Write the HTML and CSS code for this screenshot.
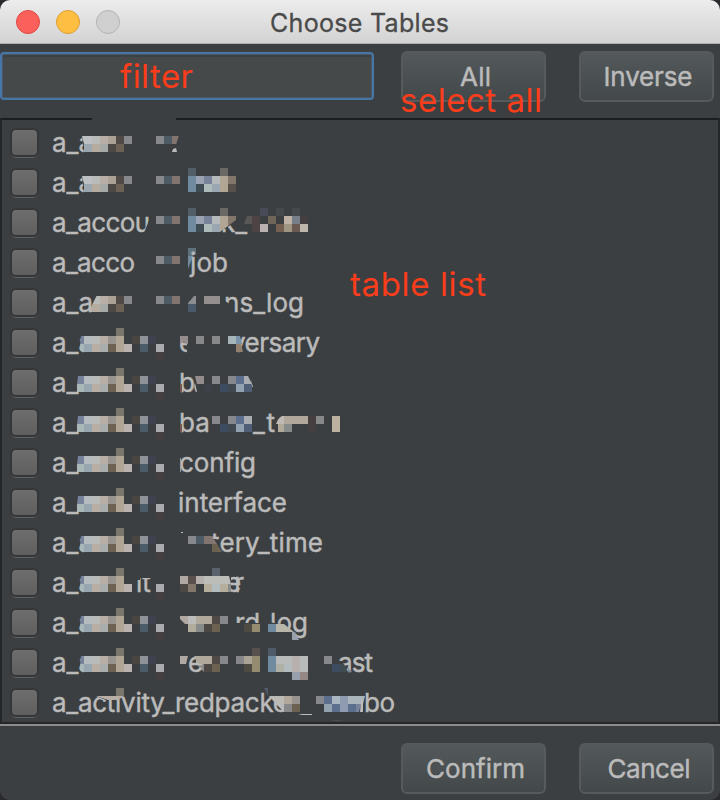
FILE: index.html
```
<!DOCTYPE html>
<html lang="en">
<head>
<meta charset="utf-8">
<title>Choose Tables</title>
<link rel="stylesheet" href="styles.css">
</head>
<body>
<svg class="defs" aria-hidden="true">
  <defs>
    <g id="dots"><path fill="#87888b" d="M156 13h8v8h-8z"/><path fill="#4c5b66" d="M164 13h8v8h-8z"/><path fill="#82756f" d="M172 13h8v8h-8z"/></g>
    <g id="acc">
      <path class="bg" d="M82 12h50v18H84z"/>
      <path fill="#bcc0c2" d="M82 13h10v8h-8z"/><path fill="#b9bbbb" d="M92 13h8v8h-8z"/><path fill="#b9aea6" d="M100 13h8v8h-8z"/><path fill="#aba296" d="M108 13h8v8h-8z"/><path fill="#4f4a45" d="M116 13h8v8h-8z"/><path fill="#87888b" d="M124 13h8v8h-8z"/>
      <path fill="#9ba7ae" d="M84 21h8v8h-8z"/><path fill="#b5ab9e" d="M92 21h8v8h-8z"/><path fill="#a5a9a8" d="M100 21h8v8h-8z"/><path fill="#4d4a45" d="M108 21h8v8h-8z"/><path fill="#6b6153" d="M116 21h8v8h-8z"/>
    </g>
    <g id="act">
      <path class="bg" d="M84 12h20v18H84z"/>
      <path fill="#77839b" d="M81 13h3v8h-4z"/><path fill="#b5bbbe" d="M84 13h8v8h-8z"/><path fill="#b9bbbb" d="M92 13h8v8h-8z"/><path fill="#b9aea6" d="M100 13h8v8h-8z"/><path fill="#98938f" d="M108 13h8v8h-8z"/><path fill="#7b776d" d="M116 5h8v8h-8z"/><path fill="#b1a594" d="M116 13h8v16h-8z"/>
      <path fill="#a9b8b7" d="M80 21h4v8h-2z"/><path fill="#98a6b1" d="M84 21h8v8h-8z"/><path fill="#b8aea3" d="M92 21h8v8h-8z"/><path fill="#a9adab" d="M100 21h8v8h-8z"/><path fill="#6d6252" d="M108 21h8v8h-8z"/><path fill="#bbb3b0" d="M124 21h8v8h-8z"/>
      <path fill="#4b4542" d="M132 13h8v8h-8z"/><path fill="#8f9299" d="M140 13h8v8h-8z"/><path fill="#404150" d="M148 13h8v8h-8z"/><path fill="#4c5c6a" d="M140 21h8v8h-8z"/><path fill="#a9abb0" d="M156 21h8v8h-8z"/><path fill="#463f42" d="M156 29h8v8h-8z"/>
    </g>
    <g id="edge"><path fill="#77839b" d="M78 13h6v8h-7z"/><path fill="#a9b8b7" d="M77 21h7v8h-7z"/></g>
    <g id="hook">
      <path fill="#515d68" d="M188 5h8v8h-8z"/><path fill="#6a6965" d="M220 5h8v8h-8z"/><path fill="#708ba0" d="M188 13h8v16h-8z"/><path fill="#9aa3b1" d="M196 13h8v8h-8z"/><path fill="#77829b" d="M204 13h8v8h-8z"/><path fill="#b5b9bc" d="M212 13h8v8h-8z"/><path fill="#404c54" d="M196 21h8v8h-8z"/><path fill="#adbbbb" d="M204 21h8v8h-8z"/><path fill="#9aa7b2" d="M212 21h8v8h-8z"/>
    </g>
    <g id="ban">
      <path fill="#87888d" d="M212 13h8v8h-8zM228 13h8v8h-8z"/><path fill="#5d6f8e" d="M236 13h8v8h-8z"/><path fill="#3d4c60" d="M220 21h8v8h-8z"/><path fill="#404952" d="M228 21h8v8h-8z"/><path fill="#93a2b0" d="M236 21h8v8h-8z"/><path fill="#4f5f77" d="M244 21h8v8h-8z"/>
    </g>
    <g id="rec">
      <path fill="#b0a89b" d="M196 13h16v8h-16z"/><path fill="#4f4a45" d="M212 13h8v8h-8z"/><path fill="#87888d" d="M220 13h8v8h-8z"/><path fill="#4d4844" d="M204 21h8v8h-8z"/><path fill="#6d6252" d="M212 21h8v8h-8z"/>
    </g>
  </defs>
</svg>
<main class="window">
  <header class="titlebar">
    <div class="lights"><i class="light close"></i><i class="light minimize"></i><i class="light zoom"></i></div>
    <h1 class="title"><svg width="182" height="43"><text x="1" y="32" textLength="179">Choose Tables</text></svg></h1>
  </header>
  <div class="toolbar">
    <div class="field"></div>
    <button class="btn wide all"><svg width="140" height="46"><text x="57" y="32" textLength="31">All</text></svg></button>
    <button class="btn narrow"><svg width="130" height="46"><text x="22.5" y="32" textLength="89">Inverse</text></svg></button>
  </div>
  <section class="list">
    <i class="notch"></i>
    <div class="row"><i class="check"></i><svg class="name" viewBox="48 0 660 40"><text x="52" y="29">a_a</text><use href="#acc"/><use href="#dots"/><path class="bg" d="M179 12h3v10h-6z"/><path class="ink" d="M172 29l1-3 3-1 1 4z"/></svg></div>
    <div class="row"><i class="check"></i><svg class="name" viewBox="48 0 660 40"><text x="52" y="29">a_a</text><use href="#acc"/><use href="#dots"/><use href="#hook"/><path fill="#b1a594" d="M220 13h8v16h-8z"/><path fill="#82776a" d="M228 13h8v8h-8z"/><path fill="#58504b" d="M228 21h8v8h-8z"/></svg></div>
    <div class="row"><i class="check"></i><svg class="name" viewBox="48 0 660 40"><text x="52" y="29" textLength="98">a_accou</text><path class="bg" d="M151 12v18h-7z"/><use href="#dots"/><text x="221" y="29">k_</text><path class="bg" d="M220 8h17v9l-12 9h-5z"/><use href="#hook"/><path fill="#b1a594" d="M220 13h8v10l-8 6z"/><path fill="#82776a" d="M228 13h8v4l-8 6z"/><path fill="#595855" d="M247 13h5v8h-8z"/><path fill="#4f4445" d="M252 13h8v16h-8z"/><path fill="#474c58" d="M260 5h8v8h-8z"/><path fill="#43494c" d="M276 5h8v8h-8zM292 5h8v8h-8z"/><path fill="#706559" d="M268 13h8v8h-8z"/><path fill="#bfb1a3" d="M284 13h8v8h-8z"/><path fill="#77808a" d="M292 13h8v8h-8z"/><path fill="#453f42" d="M300 13h8v8h-8z"/><path fill="#b9b2b1" d="M260 21h8v8h-8z"/><path fill="#756052" d="M276 21h8v8h-8z"/><path fill="#a09482" d="M284 21h8v8h-8z"/><path fill="#6b5a54" d="M292 21h8v8h-8z"/><path fill="#bfb7ab" d="M300 21h8v8h-8z"/></svg></div>
    <div class="row"><i class="check"></i><svg class="name" viewBox="48 0 660 40"><text x="52" y="29" textLength="83">a_acco</text><use href="#dots"/><path fill="#5f717b" d="M188 5h8v6l-3 2h-5z"/><path fill="#708ba0" d="M188 13h5l-5 13z"/><text x="190" y="29" textLength="38">job</text></svg></div>
    <div class="row"><i class="check"></i><svg class="name" viewBox="48 0 660 40"><text x="52" y="29">a_a</text><use href="#acc"/><path class="bg" d="M91 12h6l-6 12z"/><path class="bg" d="M50 10h41v24H50z"/><text x="52" y="29">a_a</text><use href="#dots"/><path fill="#8b8d92" d="M188 20l6-7h2v8h-8z"/><path fill="#4b5a6b" d="M188 21h8v8h-8z"/><path fill="#958f8f" d="M204 13h16v8h-16z"/><text x="224" y="29" textLength="80">ns_log</text><path class="bg" d="M223 17l7 4v9h-7z"/></svg></div>
    <div class="row"><i class="check"></i><svg class="name" viewBox="48 0 660 40"><text x="52" y="29">a_a</text><use href="#act"/><text x="179" y="29" textLength="13">e</text><path class="bg" d="M187 10h8v22h-8z"/><path fill="#958d8d" d="M180 13h8v8h-2l-3-3-2 3h-1z"/><path fill="#87888a" d="M196 13h8v8h-8zM212 13h8v8h-8z"/><text x="231" y="29" textLength="89">versary</text><path class="bg" d="M228 12h10v18h-10z"/><path fill="#a5b5ba" d="M228 13h8v8h-8z"/><path fill="#7b93a8" d="M236 13h4l2 8h-6z"/><path fill="#94806f" d="M236 21h5l2 8h-7z"/></svg></div>
    <div class="row"><i class="check"></i><svg class="name" viewBox="48 0 660 40"><text x="52" y="29">a_</text><use href="#act"/><use href="#edge"/><text x="179" y="29">b</text><path fill="#6e5a50" d="M180 21h2v8h-2z"/><path fill="#958d8d" d="M195 13h9v8h-7z"/><path class="ink" d="M195 20l2 9h-1q-3-5-1-9z"/><path fill="#3d4148" d="M204 21h8v8h-8z"/><use href="#ban"/><path fill="#a9adb1" d="M244 13h4l4 8h-8z"/><path class="ink" d="M251 17l2 7h-1z"/></svg></div>
    <div class="row"><i class="check"></i><svg class="name" viewBox="48 0 660 40"><text x="52" y="29">a_</text><use href="#act"/><use href="#edge"/><text x="179" y="29">ba</text><path fill="#6e5a50" d="M180 21h2v8h-2z"/><use href="#ban"/><path fill="#a9adb1" d="M244 13h8v8h-8z"/><text x="253" y="29" textLength="22">_t</text><path fill="#bfbab5" d="M276 21q2-6 6-8h2v8z"/><path fill="#b1a79b" d="M284 13h24v8h-24z"/><path fill="#b1a999" d="M278 21h6v8h-6z"/><path fill="#878c8b" d="M284 21h8v8h-8z"/><path fill="#463f42" d="M308 13h8v16h-8z"/><path fill="#87888a" d="M316 13h8v8h-8z"/><path fill="#bdb2a2" d="M332 13h8v16h-8z"/></svg></div>
    <div class="row"><i class="check"></i><svg class="name" viewBox="48 0 660 40"><text x="52" y="29">a_</text><use href="#act"/><use href="#edge"/><text x="179" y="29" textLength="77">config</text><path fill="#a09a94" d="M180 15h1v14h-1z"/></svg></div>
    <div class="row"><i class="check"></i><svg class="name" viewBox="48 0 660 40"><text x="52" y="29">a_</text><use href="#act"/><use href="#edge"/><text x="178" y="29" textLength="109">interface</text></svg></div>
    <div class="row"><i class="check"></i><svg class="name" viewBox="48 0 660 40"><text x="52" y="29">a_a</text><use href="#act"/><path class="ink" d="M181 9h2v1h-2z"/><text x="211" y="29" textLength="112">tery_time</text><path class="bg" d="M210 16h6l4 8v6h-10z"/><path fill="#87888d" d="M188 13h8v8h-8z"/><path fill="#4c5b66" d="M196 13h8v8h-8z"/><path fill="#82756f" d="M204 13h8l5 8h-13z"/><path fill="#6d6252" d="M212 21h5l5 8h-10z"/></svg></div>
    <div class="row"><i class="check"></i><svg class="name" viewBox="48 0 660 40"><text x="52" y="29">a_a</text><use href="#act"/><path class="bg" d="M132 12h24v18h-24z"/><text x="136" y="29">it</text><path class="bg" d="M134 5h20v10l-14 0v2h-6z"/><text x="226" y="29" textLength="18">er</text><path class="bg" d="M224 12h7v18h-7z"/><path fill="#5c626b" d="M212 5h8v8h-8z"/><path fill="#b0a8a2" d="M180 13h8v8h-8z"/><path fill="#5a504b" d="M188 13h8v8h-8z"/><path fill="#b5b0ab" d="M196 13h8v8h-8z"/><path fill="#bcbcb9" d="M204 13h25l2 8h-27z"/><path fill="#4d4844" d="M180 21h8v8h-8z"/><path fill="#82776a" d="M188 21h8v8h-8z"/><path fill="#b5ae9c" d="M204 21h24v8h-24z"/><path fill="#b2bcbf" d="M212 21h8v8h-8z"/><path fill="#878c8b" d="M228 21h3v8h-3z"/></svg></div>
    <div class="row"><i class="check"></i><svg class="name" viewBox="48 0 660 40"><text x="52" y="29">a_a</text><use href="#act"/><path fill="#b0a8a2" d="M180 13h8v8h-3l-5-5z"/><path fill="#bcbcbc" d="M188 13h8v8h-8z"/><use href="#rec"/><path fill="#b1ac9b" d="M188 21h8v8h-8z"/><path fill="#878c8b" d="M196 21h8v8h-8z"/><text x="235" y="29">rd</text><text x="270" y="29" textLength="38">log</text><path class="bg" d="M234 20h27v10h-27zM268 19l12 2 10 9h-22z"/><path fill="#4f4a42" d="M244 21h8v8h-8z"/><path fill="#958b70" d="M252 21h8v8h-8z"/><path fill="#708ba0" d="M268 21h8v8h-8z"/><path fill="#b8b5a9" d="M276 21h8l10 8h-18z"/><path fill="#98a0ae" d="M292 29h3l4 8h-7z"/></svg></div>
    <div class="row"><i class="check"></i><svg class="name" viewBox="48 0 660 40"><text x="52" y="29">a_a</text><use href="#act"/><path fill="#b0a8a2" d="M180 13h8l-2 8h-6z"/><use href="#rec"/><path fill="#878c8b" d="M196 21h8v8z"/><text x="188" y="29">e</text><path fill="#b0a89b" d="M194 13h10v8h-5z"/><path fill="#87868b" d="M236 13h8v8h-8z"/><path fill="#aba296" d="M244 13h8v8h-8z"/><path fill="#57504f" d="M252 5h8v8h-8z"/><path fill="#4f4a42" d="M244 21h8v8h-8z"/><path fill="#958b70" d="M252 13h8v16h-8z"/><path fill="#505a68" d="M268 5h8v8h-8z"/><path fill="#708ba0" d="M268 13h8v16h-8z"/><path fill="#b9bbbb" d="M276 13h32v16h-32z"/><path fill="#b1b0a5" d="M276 21h8v8h-8z"/><path fill="#b2bcbf" d="M284 21h8v8h-8z"/><path fill="#b8b0ad" d="M292 13h8v16h-8z"/><path fill="#98a0ae" d="M292 29h8v8h-8z"/><path fill="#958783" d="M300 29h8v8h-8z"/><path fill="#87888d" d="M324 13h8v8h-8z"/><text x="338" y="29" textLength="35">ast</text><path class="bg" d="M336 18h6l6 12h-12z"/><path fill="#3d4c60" d="M332 21h8v8h-8z"/><path fill="#404c54" d="M340 21h4l4 8h-8z"/><path fill="#77879b" d="M348 25l4 4h-4z"/></svg></div>
    <div class="row"><i class="check"></i><svg class="name" viewBox="48 0 660 40"><text x="52" y="29" textLength="236">a_activity_redpacke</text><path class="bg" d="M96 4h28v8l-7 5h-11l-10-4z"/><path fill="#7b776d" d="M116 5h8v8h-8z"/><path fill="#b9aea6" d="M96 13h28l-6 4h-10z"/><path class="bg" d="M266 7l6 5h40v18h-25z"/><path fill="#505a68" d="M264 5h4v8z"/><path fill="#bcbab5" d="M269 13h15v8h-8z"/><path fill="#b0a89b" d="M284 13h8v8h-8z"/><path fill="#98938f" d="M292 13h8v8h-8z"/><path fill="#b9bbbb" d="M276 21h8v8z"/><path fill="#87888a" d="M284 21h8v8h-8z"/><path fill="#6d6252" d="M292 21h8v8h-8z"/><path class="ink" d="M298 31h14v1h-10z"/><path fill="#87888d" d="M316 13h8v8h-8z"/><path fill="#5d6f8e" d="M324 13h8v8h-8z"/><path fill="#a9b5c0" d="M332 13h8v8h-8z"/><path fill="#8f9bb0" d="M340 13h8v16h-8z"/><path fill="#a9b5ba" d="M348 13h17l-2 8h-15z"/><path fill="#93a2b0" d="M324 21h8v8h-8z"/><path fill="#5d6f8e" d="M332 21h8v8h-8zM348 21h8v8h-8z"/><path fill="#77829b" d="M356 21h5l-2 8h-3z"/><path class="ink" d="M361 18l2-2v13h-3z"/><text x="364" y="29" textLength="31">bo</text><path fill="#504f4e" d="M331 38q6-2 13 0z"/></svg></div>
  </section>
  <footer class="footer">
    <button class="btn wide"><svg width="140" height="46"><text x="23" y="32" textLength="99">Confirm</text></svg></button>
    <button class="btn narrow"><svg width="130" height="46"><text x="26.5" y="32" textLength="83">Cancel</text></svg></button>
  </footer>
  <svg class="notes" viewBox="0 0 720 800"><text x="120" y="87.5" textLength="73">filter</text><text x="400" y="111.5" textLength="142">select all</text><text x="350" y="295.5" textLength="136">table list</text></svg>
</main>
</body>
</html>
```
FILE: styles.css
```
* { box-sizing: border-box; }
body { margin: 0; background: #292a2d; font-family: Inter, "Liberation Sans", sans-serif; font-size: 26px; }
svg { display: block; }
.defs { position: absolute; width: 0; height: 0; }
.window {
  position: relative;
  width: 720px;
  height: 800px;
  display: flex;
  flex-direction: column;
  overflow: hidden;
  background: #3c3f41;
  border-radius: 10px;
}
.titlebar {
  height: 44px;
  display: grid;
  grid-template-columns: 269px 1fr;
  background: linear-gradient(#ececec, #d3d3d3);
  border-bottom: 1px solid #adb0b0;
}
.lights { display: flex; gap: 16px; padding: 10px 0 0 16px; }
.light { width: 24px; height: 24px; border-radius: 50%; border: 1px solid; }
.close { background: #fc605b; border-color: #df4744; }
.minimize { background: #fdbe41; border-color: #de9f34; }
.zoom { background: #d0d0d0; border-color: #b3b3b3; }
.title { margin: 0; font-size: 25px; font-weight: 400; }
.title text { fill: #4a4a4a; stroke: #4a4a4a; stroke-width: .3px; }
.toolbar { height: 74px; display: flex; padding: 7px 6px 0 0; }
.field {
  width: 374px;
  height: 48px;
  margin: 1px 27px 0 0;
  background: #45494a;
  border: 2px solid #4876a7;
  border-radius: 4px;
  box-shadow: inset 0 0 0 1px #485866, inset 1px 3px 0 #3c4244;
}
.btn {
  height: 51px;
  padding: 0;
  font: inherit;
  color: #bbb;
  background: linear-gradient(#53585a, #43494a);
  border: 2px solid #565a5b;
  border-radius: 6px;
}
.btn text, .name text, .ink { fill: #bbb; }
.btn text, .name text { stroke: #bbb; stroke-width: .45px; }
.wide { width: 145px; margin-right: 33px; }
.narrow { width: 135px; }
.list {
  position: relative;
  height: 606px;
  padding-top: 3px;
  border: 2px solid #252729;
  border-top-color: #1c1d1e;
  overflow: visible;
}
.notch { position: absolute; left: 90px; top: -2px; width: 84px; height: 2px; background: #3c3f41; }
.row { height: 40px; display: flex; padding-left: 8px; }
.check {
  width: 29px;
  height: 29px;
  margin: 5px 9px 0 0;
  background: linear-gradient(#6d6d6d, #5f5f5f);
  border: 2px solid #343638;
  border-radius: 6px;
  box-shadow: 0 2px 0 -1px #606263;
}
.name { width: 660px; height: 40px; }
.bg { fill: #3c3f41; }
.footer { flex: 1; display: flex; align-items: flex-start; justify-content: flex-end; border-top: 2px solid #8b8c8d; padding: 17px 6px 0 0; }
.notes { position: absolute; inset: 0; width: 720px; height: 800px; pointer-events: none; }
.notes text { fill: #fc3d1b; font-size: 33px; }
```
